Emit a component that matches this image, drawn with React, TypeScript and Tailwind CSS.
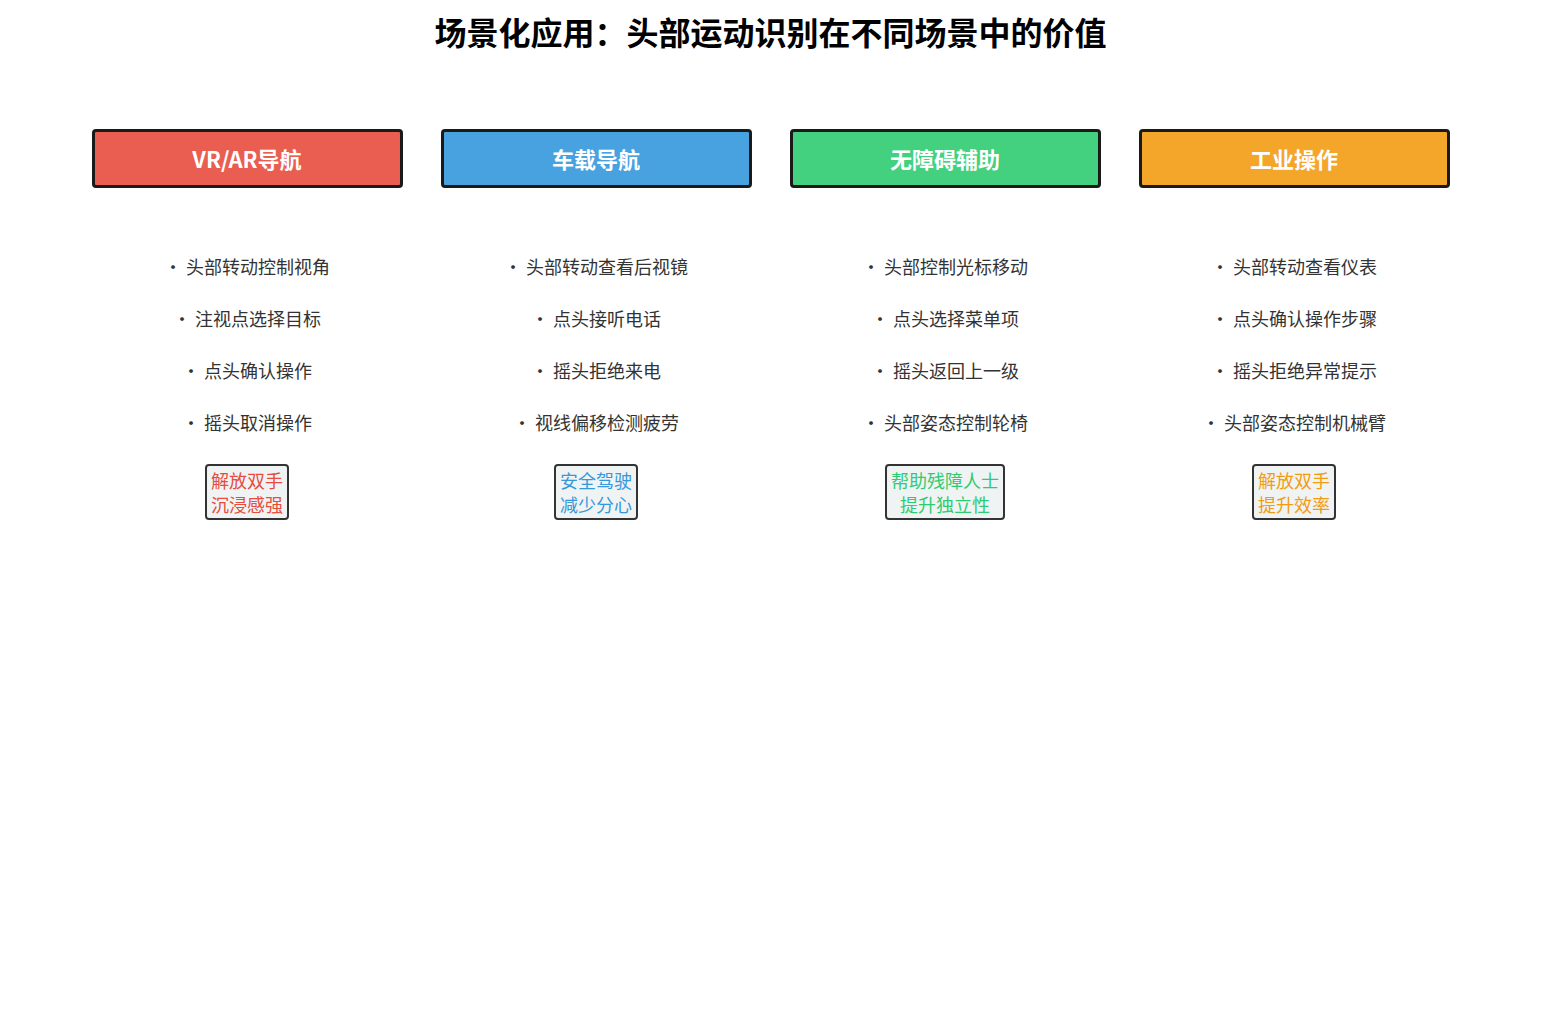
const scenes = [
  {
    title: 'VR/AR导航',
    head: 'bg-[#e95e50]',
    tag: 'text-[#e74c3c]',
    items: ['头部转动控制视角', '注视点选择目标', '点头确认操作', '摇头取消操作'],
    value: ['解放双手', '沉浸感强'],
  },
  {
    title: '车载导航',
    head: 'bg-[#48a2df]',
    tag: 'text-[#3498db]',
    items: ['头部转动查看后视镜', '点头接听电话', '摇头拒绝来电', '视线偏移检测疲劳'],
    value: ['安全驾驶', '减少分心'],
  },
  {
    title: '无障碍辅助',
    head: 'bg-[#43d17f]',
    tag: 'text-[#2ecc71]',
    items: ['头部控制光标移动', '点头选择菜单项', '摇头返回上一级', '头部姿态控制轮椅'],
    value: ['帮助残障人士', '提升独立性'],
  },
  {
    title: '工业操作',
    head: 'bg-[#f4a62a]',
    tag: 'text-[#f39c12]',
    items: ['头部转动查看仪表', '点头确认操作步骤', '摇头拒绝异常提示', '头部姿态控制机械臂'],
    value: ['解放双手', '提升效率'],
  },
]

export default function App() {
  return (
    <div className="min-h-[1021px] w-full bg-white font-['Noto_Sans_CJK_SC','Noto_Sans',sans-serif]">
      <h1 className="pt-[11px] text-center text-[32px] font-bold leading-[40px] text-black">
        场景化应用：头部运动识别在不同场景中的价值
      </h1>

      <div className="mt-[78px] flex justify-center gap-[38px]">
        {scenes.map((s) => (
          <div key={s.title} className="flex w-[311px] flex-col items-center">
            <div
              className={`flex h-[59px] w-full items-center justify-center rounded-[4px] border-[3px] border-[#1a1a1a] text-[22px] font-bold text-white ${s.head}`}
            >
              {s.title}
            </div>

            <ul className="mt-[52px] flex flex-col items-center">
              {s.items.map((it) => (
                <li key={it} className="flex h-[52px] items-center text-[18px] text-[#333333]">
                  · {it}
                </li>
              ))}
            </ul>

            <div
              className={`mt-[16px] rounded-[4px] border-2 border-[#333333] bg-[#f0f3f4] px-[4px] py-[2px] text-center text-[18px] leading-[24px] ${s.tag}`}
            >
              {s.value.map((v) => (
                <div key={v}>{v}</div>
              ))}
            </div>
          </div>
        ))}
      </div>
    </div>
  )
}
